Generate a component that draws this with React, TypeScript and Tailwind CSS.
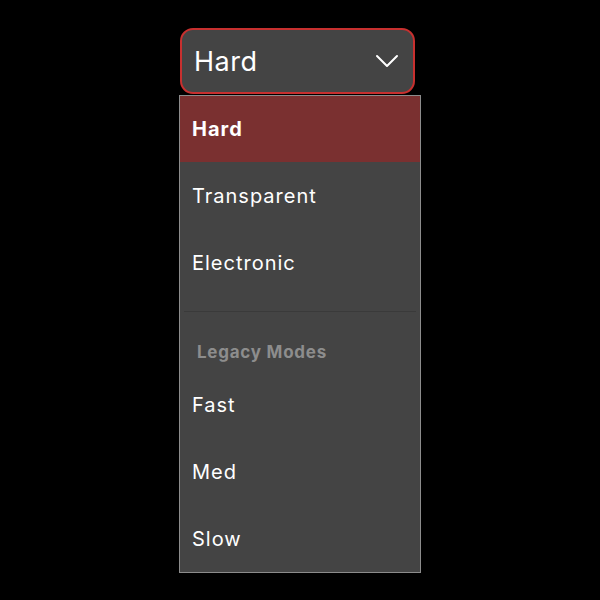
const items = ["Hard", "Transparent", "Electronic"]
const legacy = ["Fast", "Med", "Slow"]

export default function App() {
    const selected = "Hard"

    return (
        <div className="w-[600px] h-[600px] bg-black flex justify-center" style={{ fontFamily: "Inter, 'Noto Sans', sans-serif" }}>
            <div className="w-[242px] pt-[28px] flex flex-col">
                <button className="ml-px w-[235px] h-[66px] rounded-[13px] border-2 border-[#c7302f] bg-[#444444] flex items-center justify-between pl-[12px] pr-[14px] text-white">
                    <span className="text-[27px] leading-none tracking-[0.5px]">{selected}</span>
                    <svg width="24" height="14" viewBox="0 0 24 14" fill="none" stroke="white" strokeWidth="2" strokeLinecap="round" strokeLinejoin="round">
                        <path d="M2 2l10 10L22 2" />
                    </svg>
                </button>
                <div className="mt-px border border-[#8c8c8c] bg-[#444444] text-white text-[20px] tracking-[1px]">
                    {items.map((item, i) => (
                        <div
                            key={item}
                            className={item === selected
                                ? "h-[66px] flex items-center px-[12px] bg-[#7a3030] font-bold"
                                : "h-[67px] flex items-center px-[12px]"}
                        >
                            {item}
                        </div>
                    ))}
                    <div className="mt-[15px] mx-[4px] h-px bg-[#3a3a3a]" />
                    <div className="pt-[30px] pb-[9px] px-[17px] text-[17px] leading-[20px] tracking-[0.75px] font-bold text-[#8d8d8d]">Legacy Modes</div>
                    {legacy.map(item => (
                        <div key={item} className="h-[67px] flex items-center px-[12px]">{item}</div>
                    ))}
                </div>
            </div>
        </div>
    )
}
